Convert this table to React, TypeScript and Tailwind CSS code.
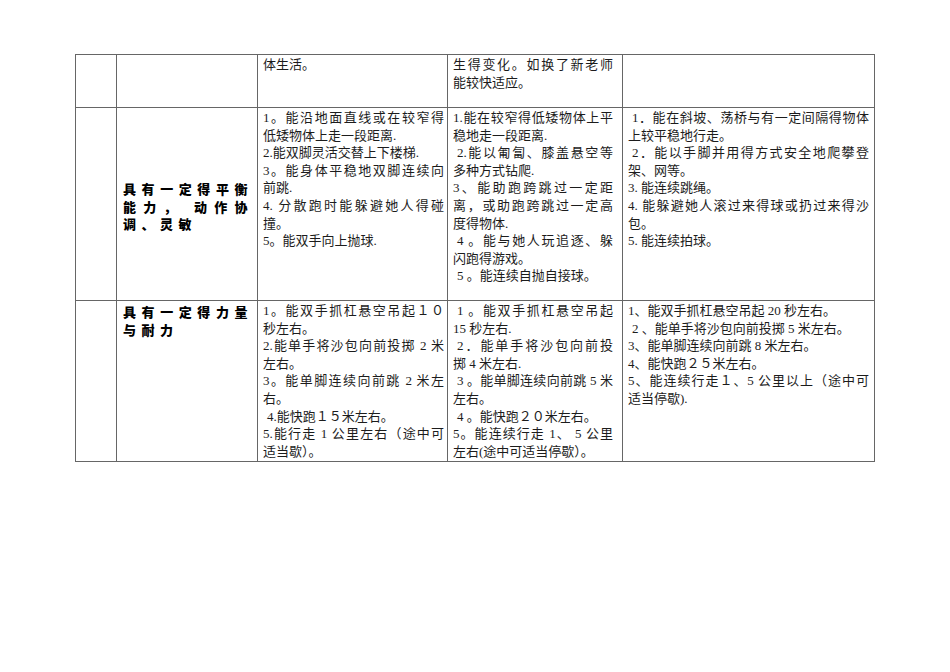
// 幼儿体能发展目标表（局部）
// 行末带 "|" 的行两端对齐；行首空格表示略微缩进

const BODY = "font-['Liberation_Serif','Noto_Sans_CJK_SC',serif]";
const HEAD = "font-['Noto_Sans_CJK_SC','Noto_Sans_CJK_JP',sans-serif]";

type Cell = string[];

type Row = {
  height: string;
  title: string[];
  titleMiddle?: boolean;
  cells: [Cell, Cell, Cell];
};

const rows: Row[] = [
  {
    height: "h-[53px]",
    title: [],
    cells: [["体生活。"], ["生得变化。如换了新老师|", "能较快适应。"], []],
  },
  {
    height: "h-[193px]",
    title: ["具有一定得平衡|", "能力， 动作协|", "调、灵敏"],
    titleMiddle: true,
    cells: [
      [
        "1。能沿地面直线或在较窄得|",
        "低矮物体上走一段距离.",
        "2.能双脚灵活交替上下楼梯.",
        "3。能身体平稳地双脚连续向|",
        "前跳.",
        "4. 分散跑时能躲避她人得碰|",
        "撞。",
        "5。能双手向上抛球.",
      ],
      [
        "1.能在较窄得低矮物体上平|",
        "稳地走一段距离.",
        " 2.能以匍匐、膝盖悬空等|",
        "多种方式钻爬.",
        "3、能助跑跨跳过一定距|",
        "离，或助跑跨跳过一定高|",
        "度得物体.",
        " 4 。能与她人玩追逐、躲|",
        "闪跑得游戏。",
        " 5 。能连续自抛自接球。",
      ],
      [
        " 1．能在斜坡、荡桥与有一定间隔得物体|",
        "上较平稳地行走。",
        " 2．能以手脚并用得方式安全地爬攀登|",
        "架、网等。",
        "3. 能连续跳绳。",
        "4. 能躲避她人滚过来得球或扔过来得沙|",
        "包。",
        "5. 能连续拍球。",
      ],
    ],
  },
  {
    height: "h-[161px]",
    title: ["具有一定得力量|", "与耐力"],
    cells: [
      [
        "1。能双手抓杠悬空吊起１０|",
        "秒左右。",
        "2.能单手将沙包向前投掷 2 米|",
        "左右。",
        "3。能单脚连续向前跳 2 米左|",
        "右。",
        " 4.能快跑１５米左右。",
        "5.能行走 1 公里左右（途中可|",
        "适当歇）。",
      ],
      [
        " 1 。能双手抓杠悬空吊起|",
        "15 秒左右.",
        " 2．能单手将沙包向前投|",
        "掷 4 米左右.",
        " 3 。能单脚连续向前跳 5 米|",
        "左右。",
        " 4 。能快跑２０米左右。",
        "5。能连续行走 1、 5 公里|",
        "左右(途中可适当停歇）。",
      ],
      [
        "1、能双手抓杠悬空吊起 20 秒左右。",
        " 2 、能单手将沙包向前投掷 5 米左右。",
        "3、能单脚连续向前跳 8 米左右。",
        "4、能快跑２５米左右。",
        "5、能连续行走１、5 公里以上（途中可|",
        "适当停歇).",
      ],
    ],
  },
];

function Line({ text }: { text: string }) {
  const justify = text.endsWith("|");
  const indent = text.startsWith(" ");
  const clean = text.replace(/\|$/, "").trim();
  return (
    <div
      className={
        (justify ? "text-justify [text-align-last:justify] " : "") +
        (indent ? "pl-[4px] " : "") +
        "whitespace-nowrap"
      }
    >
      {clean}
    </div>
  );
}

const padCols = ["pl-[5px] pr-[3px]", "pl-[5px] pr-[9px]", "pl-[5px] pr-[5px]"];

export default function App() {
  return (
    <div className="w-[950px] h-[672px] bg-white pt-[54px] pl-[75px]">
      <table className="table-fixed border-collapse w-[799px] text-[#1c1c1c]">
        <colgroup>
          <col className="w-[41px]" />
          <col className="w-[141px]" />
          <col className="w-[190px]" />
          <col className="w-[175px]" />
          <col className="w-[252px]" />
        </colgroup>
        <tbody>
          {rows.map((row, i) => (
            <tr key={i} className={row.height}>
              <td className="border border-[#666] p-0" />
              <td
                className={
                  "border border-[#666] pl-[6px] pr-[4px] " +
                  (row.titleMiddle ? "align-middle pt-[5px]" : "align-top pt-[2px]")
                }
              >
                <div
                  className={`${HEAD} text-[13px] leading-[17.6px] font-black tracking-[5.5px] text-black`}
                >
                  {row.title.map((t, j) => (
                    <Line key={j} text={t} />
                  ))}
                </div>
              </td>
              {row.cells.map((cell, j) => (
                <td
                  key={j}
                  className={`border border-[#666] align-top pt-[1px] ${padCols[j]}`}
                >
                  <div className={`${BODY} text-[13px] leading-[17.6px]`}>
                    {cell.map((t, k) => (
                      <Line key={k} text={t} />
                    ))}
                  </div>
                </td>
              ))}
            </tr>
          ))}
        </tbody>
      </table>
    </div>
  );
}
